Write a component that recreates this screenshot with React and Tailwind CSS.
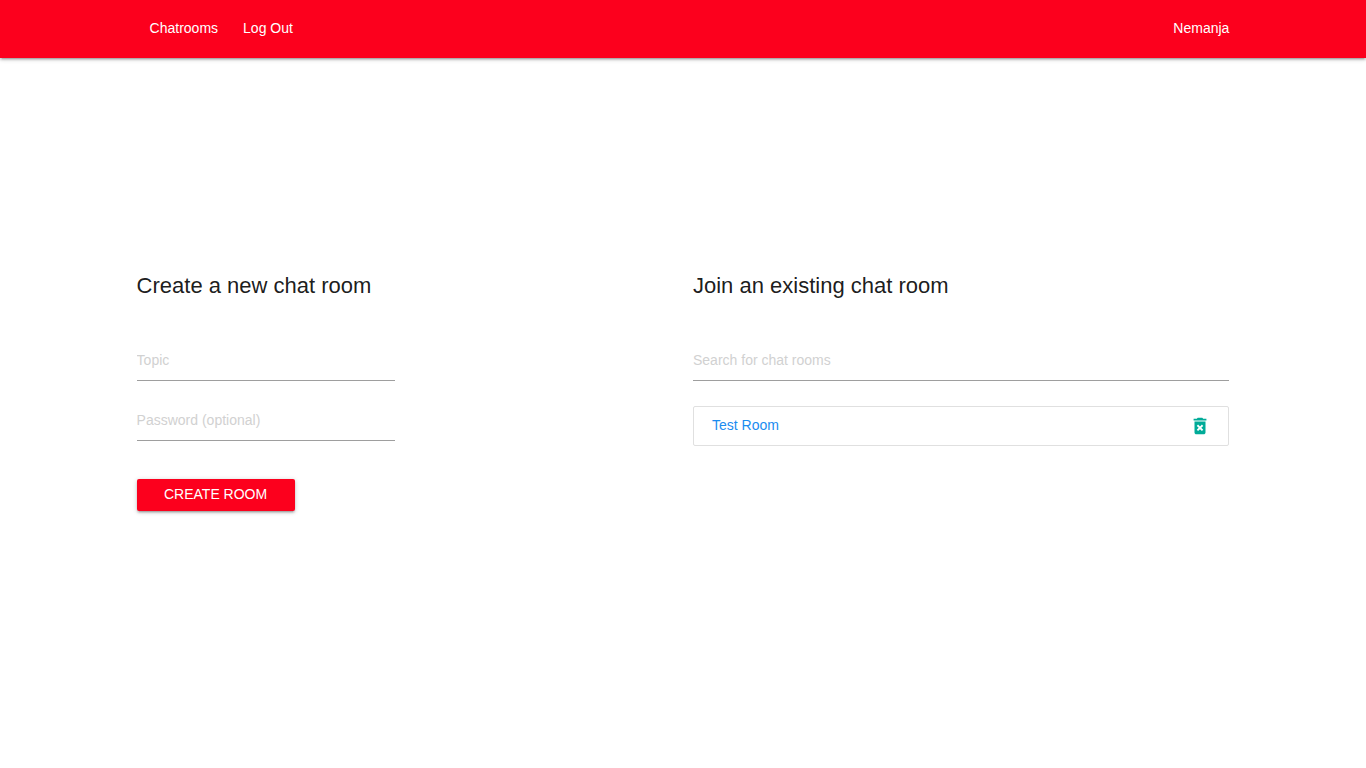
import { MdDeleteForever } from "react-icons/md";

const rooms = ["Test Room"];

function Field({ id, label, type = "text" }) {
  return (
    <input
      id={id}
      type={type}
      aria-label={label}
      placeholder={label}
      className="block h-[41px] w-full border-b border-[#9e9e9e] bg-transparent text-sm text-black/90 placeholder:text-[#d1d1d1] placeholder:opacity-100 focus:outline-none"
    />
  );
}

export default function App() {
  return (
    <div className="min-h-screen bg-white font-['Liberation_Sans',Arial,sans-serif] text-sm text-black/90">
      <header className="bg-[#fc001d] shadow-[0_2px_2px_0_rgba(0,0,0,0.14),0_3px_1px_-2px_rgba(0,0,0,0.12),0_1px_5px_0_rgba(0,0,0,0.2)]">
        <nav className="mx-auto flex w-4/5 items-center justify-between pt-[18px] pb-5 text-white">
          <div className="flex gap-[25px] pl-[13px]">
            <a href="#chatrooms">Chatrooms</a>
            <a href="#logout">Log Out</a>
          </div>
          <a href="#profile">Nemanja</a>
        </nav>
      </header>
      <main className="mx-auto flex w-4/5 gap-5 pt-[210px]">
        <form className="flex-1">
          <h1 className="text-[22px] leading-9">Create a new chat room</h1>
          <div className="flex w-[258px] flex-col gap-[19px] pt-9">
            <Field id="topic" label="Topic" />
            <Field id="password" label="Password (optional)" type="password" />
          </div>
          <button type="button" className="mt-[38px] h-8 w-[158px] rounded-xs bg-[#fc001d] pb-0.5 text-white shadow-[0_2px_2px_0_rgba(0,0,0,0.14),0_3px_1px_-2px_rgba(0,0,0,0.12),0_1px_5px_0_rgba(0,0,0,0.2)]">
            CREATE ROOM
          </button>
        </form>
        <section className="flex-1">
          <h2 className="text-[22px] leading-9">Join an existing chat room</h2>
          <div className="pt-9">
            <Field id="search" label="Search for chat rooms" type="search" />
          </div>
          <ul className="mt-[25px] rounded-xs border border-[#e0e0e0]">
            {rooms.map((room) => (
              <li key={room} className="flex h-[38px] items-center justify-between pr-[17px] pl-[18px]">
                <a href="#room" className="pb-0.5 text-[#1a8cf0]">{room}</a>
                <button type="button" aria-label="Delete room" className="text-[#00ab98]">
                  <MdDeleteForever size={22} />
                </button>
              </li>
            ))}
          </ul>
        </section>
      </main>
    </div>
  );
}
